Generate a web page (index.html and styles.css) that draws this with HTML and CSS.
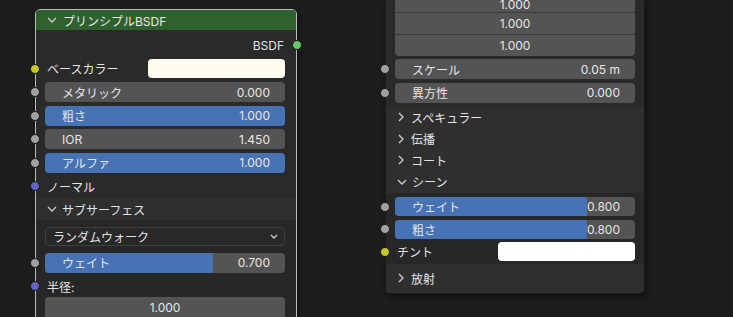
FILE: index.html
```html
<!DOCTYPE html>
<html lang="ja">
  <head>
    <meta charset="UTF-8" />
    <title>プリンシプルBSDF</title>
    <link rel="stylesheet" href="styles.css">
  </head>
  <body>
    <div class="canvas">
      <!-- left node: selected -->
      <div class="node node-left selected">
        <div class="node-head">
          <svg class="chev" width="10" height="6" viewBox="0 0 10 6"><polyline points="1,1 5,5 9,1" /></svg>
          <span>プリンシプルBSDF</span>
        </div>
        <div class="node-body">
          <div class="row row-out">BSDF<span class="sock sock-out green"></span></div>
          <div class="row"><span class="sock yellow"></span><span class="lbl">ベースカラー</span><span class="swatch cream"></span></div>
          <div class="row"><span class="sock gray"></span><div class="field"><span>メタリック</span><span>0.000</span></div></div>
          <div class="row"><span class="sock gray"></span><div class="field blue"><span>粗さ</span><span>1.000</span></div></div>
          <div class="row"><span class="sock gray"></span><div class="field"><span>IOR</span><span>1.450</span></div></div>
          <div class="row"><span class="sock gray"></span><div class="field blue"><span>アルファ</span><span>1.000</span></div></div>
          <div class="row"><span class="sock purple"></span><span class="lbl">ノーマル</span></div>
        </div>
        <div class="panel-head">
          <svg class="chev" width="10" height="6" viewBox="0 0 10 6"><polyline points="1,1 5,5 9,1" /></svg>
          <span>サブサーフェス</span>
        </div>
        <div class="panel-body sub">
          <div class="dropdown">
            <span>ランダムウォーク</span>
            <svg width="8" height="5" viewBox="0 0 8 5"><polyline points="1,1 4,4 7,1" /></svg>
          </div>
          <div class="row row-weight"><span class="sock gray"></span><div class="field slider"><div class="fill" style="width: 70%"></div><span>ウェイト</span><span>0.700</span></div></div>
          <div class="row row-radius"><span class="sock purple"></span><span class="lbl">半径:</span></div>
          <div class="vector">
            <div class="vrow">1.000</div>
            <div class="vrow">1.000</div>
          </div>
        </div>
      </div>

      <!-- right node -->
      <div class="node node-right">
        <div class="node-body top">
          <div class="vector">
            <div class="vrow first">1.000</div>
            <div class="vrow">1.000</div>
            <div class="vrow">1.000</div>
          </div>
          <div class="row row-scale"><span class="sock gray"></span><div class="field"><span>スケール</span><span>0.05 m</span></div></div>
          <div class="row"><span class="sock gray"></span><div class="field"><span>異方性</span><span>0.000</span></div></div>
        </div>
        <div class="panel-head closed">
          <svg class="chev" width="6" height="10" viewBox="0 0 6 10"><polyline points="1,1 5,5 1,9" /></svg>
          <span>スペキュラー</span>
        </div>
        <div class="panel-head closed">
          <svg class="chev" width="6" height="10" viewBox="0 0 6 10"><polyline points="1,1 5,5 1,9" /></svg>
          <span>伝播</span>
        </div>
        <div class="panel-head closed">
          <svg class="chev" width="6" height="10" viewBox="0 0 6 10"><polyline points="1,1 5,5 1,9" /></svg>
          <span>コート</span>
        </div>
        <div class="panel-head closed open">
          <svg class="chev" width="10" height="6" viewBox="0 0 10 6"><polyline points="1,1 5,5 9,1" /></svg>
          <span>シーン</span>
        </div>
        <div class="panel-body sheen">
          <div class="row"><span class="sock gray"></span><div class="field slider"><div class="fill" style="width: 80%"></div><span>ウェイト</span><span>0.800</span></div></div>
          <div class="row"><span class="sock gray"></span><div class="field slider"><div class="fill" style="width: 80%"></div><span>粗さ</span><span>0.800</span></div></div>
          <div class="row"><span class="sock yellow"></span><span class="lbl">チント</span><span class="swatch white"></span></div>
        </div>
        <div class="panel-head last">
          <svg class="chev" width="6" height="10" viewBox="0 0 6 10"><polyline points="1,1 5,5 1,9" /></svg>
          <span>放射</span>
        </div>
      </div>
    </div>
  </body>
</html>
```

FILE: styles.css
```css
body {
  margin: 0;
  background-color: #1d1d1d;
  color: #e4e4e4;
  font-family: Inter, "Noto Sans CJK JP", sans-serif;
  font-size: 12px;
}

.canvas {
  position: relative;
  width: 733px;
  height: 317px;
  overflow: hidden;
}

/* nodes sit on a free canvas */
.node {
  position: absolute;
  background-color: #2a2a2a;
  border: 1px solid rgba(0, 0, 0, 0.35);
  border-radius: 5px;
  box-shadow: 2px 3px 6px rgba(0, 0, 0, 0.45);
}

.node-left {
  left: 35px;
  top: 9px;
  width: 260px;
  height: 340px;
}

.node-right {
  left: 385px;
  top: -4px;
  width: 258px;
}

.selected {
  border-color: #b9b9b9;
}

.node-head {
  display: flex;
  align-items: center;
  gap: 6px;
  height: 20px;
  padding-left: 11px;
  background-color: #2e612e;
  border-radius: 4px 4px 0 0;
  color: #e8e8e8;
}

.chev polyline,
.dropdown polyline {
  fill: none;
  stroke: #cfcfcf;
  stroke-width: 1.3;
}

.node-body {
  padding: 5px 11px 2px 9px;
}

.node-body.top {
  padding: 0 9px 4px 9px;
}

.row {
  position: relative;
  display: flex;
  align-items: center;
  height: 20px;
  margin-bottom: 3.5px;
}

.row:last-child {
  margin-bottom: 0;
}

.row-out {
  justify-content: flex-end;
  padding-right: 1px;
}

.lbl {
  flex: 1;
  padding-left: 2px;
}

.sock {
  position: absolute;
  left: -15px;
  top: 50%;
  width: 8px;
  height: 8px;
  margin-top: -5px;
  border: 1px solid #1a1a1a;
  border-radius: 50%;
}

.sock-out {
  left: auto;
  right: -16.5px;
}

.green { background-color: #63c763; }
.yellow { background-color: #c7c729; }
.gray { background-color: #a1a1a1; }
.purple { background-color: #6363c7; }

.swatch {
  width: 137px;
  height: 19px;
  border-radius: 4px;
}

.cream { background-color: #fffcf0; }
.white { background-color: #ffffff; }

.field {
  position: relative;
  flex: 1;
  display: flex;
  justify-content: space-between;
  align-items: center;
  height: 20px;
  padding: 0 15px 0 17px;
  background-color: #545454;
  border-radius: 4px;
  overflow: hidden;
  color: #e6e6e6;
}

.field.blue {
  background-color: #4772b3;
}

.field span {
  position: relative;
}

.slider .fill {
  position: absolute;
  left: 0;
  top: 0;
  bottom: 0;
  background-color: #4772b3;
}

.panel-head {
  display: flex;
  align-items: center;
  gap: 5px;
  height: 22px;
  padding-left: 11px;
  background-color: #2f2f2f;
}

.panel-head.closed {
  height: 21.5px;
  padding-left: 10px;
  gap: 5px;
}

.panel-head.closed .chev[width="6"] {
  margin: 0 2px;
}

.panel-head.open {
  padding-left: 11px;
}

.panel-head.last {
  height: 26px;
  padding: 1px 0 2px 12px;
  border-radius: 0 0 4px 4px;
  gap: 7px;
}

.panel-body {
  background-color: #272727;
}

.panel-body.sub {
  padding: 7px 11px 0 9px;
}

.panel-body.sheen {
  padding: 4.5px 9px 3px 9px;
}

.sheen .row {
  height: 19px;
  margin-bottom: 3.5px;
}

.sheen .row:last-child {
  margin-bottom: 0;
}

.sheen .field {
  height: 19px;
}

.dropdown {
  display: flex;
  justify-content: space-between;
  align-items: center;
  height: 17px;
  padding: 0 6px 0 7px;
  margin-bottom: 6.5px;
  background-color: #282828;
  border: 1px solid #3e3e3e;
  border-radius: 4px;
}

.row-weight {
  margin-bottom: 3.5px;
}

.row-radius {
  margin-bottom: 1px;
}

.vector {
  background-color: #545454;
  border-radius: 4px;
  overflow: hidden;
}

.vrow {
  height: 21px;
  line-height: 21px;
  text-align: center;
  border-bottom: 1px solid #3a3a3a;
}

.vrow.first {
  height: 15px;
  line-height: 15px;
}

.vrow:last-child {
  border-bottom: none;
}

.row-scale {
  margin-top: 3px;
}
```
